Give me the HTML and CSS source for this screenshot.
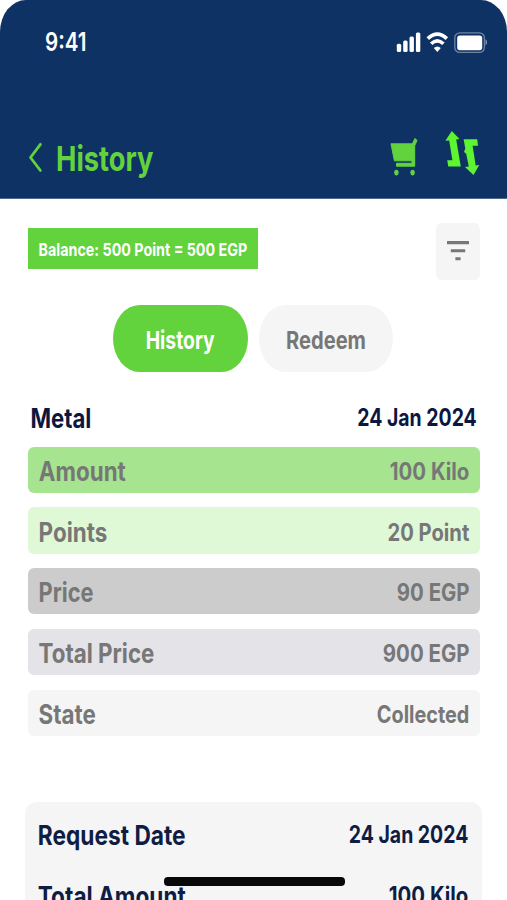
FILE: index.html
```html
<!DOCTYPE html>
<html lang="en">
<head>
<meta charset="utf-8">
<title>History</title>
<link rel="stylesheet" href="styles.css">
</head>
<body>
<div class="phone">
  <header class="header">
    <div class="status">
      <svg class="label time" width="42" height="30"><text x="0" y="21.4" textLength="41.5" lengthAdjust="spacingAndGlyphs">9:41</text></svg>
      <svg class="status-icons" width="92" height="24" viewBox="0 0 92 24">
        <g fill="#fff">
          <rect x="1.8" y="13.8" width="4.4" height="8.2" rx="1.5"/>
          <rect x="8.2" y="10.6" width="4.4" height="11.4" rx="1.5"/>
          <rect x="14.5" y="6.6" width="4.4" height="15.4" rx="1.5"/>
          <rect x="20.9" y="2.6" width="4.4" height="19.4" rx="1.5"/>
          <path d="M42.3 22 38.8 18Q42.3 14.9 45.8 18Z"/>
          <rect x="62.2" y="5.4" width="25" height="14.8" rx="2.6"/>
        </g>
        <g fill="none" stroke="#fff" stroke-width="3.6">
          <path d="M32.8 8.6Q42.3-.4 51.8 8.6"/>
          <path d="M36.2 13.8Q42.3 7.8 48.4 13.8"/>
        </g>
        <rect x="59.8" y="2.8" width="29.6" height="19.6" rx="5" fill="none" stroke="#fff" stroke-opacity=".4" stroke-width="1.3"/>
        <path d="M90.5 9.3Q92.2 10.2 92.2 12.3T90.5 15.4Z" fill="#fff" fill-opacity=".45"/>
      </svg>
    </div>
    <div class="nav">
      <svg class="back" width="16" height="32" viewBox="0 0 16 32"><path d="M13.4 3.3 3.5 16.5 13.4 29.5" fill="none" stroke="#62d23d" stroke-width="2.8" stroke-linecap="round" stroke-linejoin="round"/></svg>
      <svg class="label title" width="99" height="40"><text x="0" y="31.4" textLength="97.5" lengthAdjust="spacingAndGlyphs">History</text></svg>
      <svg class="cart" width="30" height="40" viewBox="0 0 30 40">
        <path d="M2 6.8H23.3L26 1.4 28 3.4 25.7 8.7V29.2H7.5V26.3H23V23.8H5.4Z" fill="#62d23d" stroke="#62d23d" stroke-width="1" stroke-linejoin="round"/>
        <ellipse cx="7.4" cy="35.6" rx="2.2" ry="2.8" fill="#62d23d"/>
        <ellipse cx="23.6" cy="35.6" rx="2.2" ry="2.8" fill="#62d23d"/>
      </svg>
      <svg class="swap" width="36" height="46" viewBox="0 0 36 46">
        <path d="M6.8 1 14.5 9 11.2 9.5 15.8 36.5H3.3L2.2 30.2H7.4L4.2 10.5 .4 10.8Z" fill="#5df52f"/>
        <path d="M18.6 9.3H32.2L33 15.8H27.6L30.7 35.4 34.3 35 28.5 45 20 37 23.8 36.4 21.2 23.8 19 22 20.3 18.5Z" fill="#5df52f"/>
      </svg>
    </div>
  </header>
  <main class="content">
    <div class="toolbar">
      <div class="balance"><svg class="label" width="210" height="24"><text x=".6" y="17.5" textLength="208.6" lengthAdjust="spacingAndGlyphs">Balance: 500 Point = 500 EGP</text></svg></div>
      <button class="filter" aria-label="Filter"><svg width="22" height="20" viewBox="0 0 22 20"><path d="M0 1.6H22M3.8 9.8H18.2M8.4 17.8H13.6" stroke="#777" stroke-width="3.1"/></svg></button>
    </div>
    <div class="tabs">
      <button class="tab active"><svg class="label" width="70" height="34"><text x=".7" y="26.5" textLength="69" lengthAdjust="spacingAndGlyphs">History</text></svg></button>
      <button class="tab"><svg class="label" width="81" height="34"><text x="1" y="26.5" textLength="80" lengthAdjust="spacingAndGlyphs">Redeem</text></svg></button>
    </div>
    <div class="row heading">
      <svg class="label name" width="62" height="32"><text x=".5" y="25.5" textLength="60.8" lengthAdjust="spacingAndGlyphs">Metal</text></svg>
      <svg class="label value" width="120" height="32"><text x=".3" y="23.8" textLength="119.4" lengthAdjust="spacingAndGlyphs">24 Jan 2024</text></svg>
    </div>
    <div class="rows">
      <div class="row amount">
        <svg class="label name" width="88" height="32"><text x=".8" y="26.7" textLength="87" lengthAdjust="spacingAndGlyphs">Amount</text></svg>
        <svg class="label value" width="81" height="32"><text x=".8" y="25.8" textLength="79.5" lengthAdjust="spacingAndGlyphs">100 Kilo</text></svg>
      </div>
      <div class="row points">
        <svg class="label name" width="70" height="32"><text x=".6" y="26.7" textLength="68.7" lengthAdjust="spacingAndGlyphs">Points</text></svg>
        <svg class="label value" width="83" height="32"><text x=".5" y="25.8" textLength="81.8" lengthAdjust="spacingAndGlyphs">20 Point</text></svg>
      </div>
      <div class="row price">
        <svg class="label name" width="57" height="32"><text x=".6" y="26.7" textLength="55" lengthAdjust="spacingAndGlyphs">Price</text></svg>
        <svg class="label value" width="74" height="32"><text x=".8" y="25.8" textLength="72.8" lengthAdjust="spacingAndGlyphs">90 EGP</text></svg>
      </div>
      <div class="row total">
        <svg class="label name" width="117" height="32"><text x=".6" y="26.7" textLength="115.8" lengthAdjust="spacingAndGlyphs">Total Price</text></svg>
        <svg class="label value" width="88" height="32"><text x=".8" y="25.8" textLength="86.8" lengthAdjust="spacingAndGlyphs">900 EGP</text></svg>
      </div>
      <div class="row state">
        <svg class="label name" width="59" height="32"><text x=".6" y="26.7" textLength="57.2" lengthAdjust="spacingAndGlyphs">State</text></svg>
        <svg class="label value" width="94" height="32"><text x=".8" y="25.8" textLength="92.5" lengthAdjust="spacingAndGlyphs">Collected</text></svg>
      </div>
    </div>
    <section class="card">
      <div class="row">
        <svg class="label name" width="150" height="32"><text x=".8" y="26.8" textLength="147.8" lengthAdjust="spacingAndGlyphs">Request Date</text></svg>
        <svg class="label value" width="121" height="32"><text x=".8" y="25.4" textLength="119.5" lengthAdjust="spacingAndGlyphs">24 Jan 2024</text></svg>
      </div>
      <div class="row">
        <svg class="label name" width="149" height="32"><text x=".8" y="26.5" textLength="148" lengthAdjust="spacingAndGlyphs">Total Amount</text></svg>
        <svg class="label value" width="81" height="32"><text x=".8" y="25" textLength="79.5" lengthAdjust="spacingAndGlyphs">100 Kilo</text></svg>
      </div>
    </section>
  </main>
  <div class="home-indicator"></div>
</div>
</body>
</html>
```
FILE: styles.css
```css
* { box-sizing: border-box; }
body { margin: 0; background: #fff; font-family: Inter, "Liberation Sans", sans-serif; }
svg { display: block; flex: none; }
button { border: 0; padding: 0; font: inherit; }
.phone { position: relative; width: 507px; height: 900px; overflow: hidden; background: #fff; }
.label { overflow: visible; fill: currentColor; font-weight: 700; }

.header { height: 198.5px; background: #0f3265; border-radius: 26px 26px 0 0 / 32px 32px 0 0; border-bottom: 1px solid #4f6b91; }
.status { display: flex; justify-content: space-between; padding: 30px 20px 0 44.5px; height: 60px; color: #fff; }
.time { font-size: 25.5px; font-weight: 600; }
.nav { display: flex; height: 80px; padding: 0 26px 0 27px; margin-top: 70px; color: #62d23d; }
.back { margin-top: 11px; }
.title { margin: 10px 0 0 12.5px; font-size: 34.5px; }
.cart { margin: 7px 0 0 auto; }
.swap { margin: 0 0 0 26px; }

.content { padding: 24px 27px 0 27.5px; }
.toolbar { display: flex; justify-content: space-between; }
.balance { width: 230px; height: 41.5px; margin-top: 5px; padding: 10.5px 0 0 10px; background: #62d23d; color: #fff; font-size: 17.8px; }
.filter { display: grid; place-items: center; width: 44px; height: 57.5px; background: #f5f5f5; border-radius: 5px / 7px; }
.tabs { display: flex; gap: 11px; margin: 25px 0 0 85.3px; }
.tab { display: flex; justify-content: center; width: 134.8px; height: 66.5px; padding-top: 17px; border-radius: 27px / 34px; background: #f5f5f5; color: #777; font-size: 24.5px; }
.tab.active { background: #62d23d; color: #fff; }

.row { display: flex; justify-content: space-between; align-items: flex-start; }
.name { font-size: 27px; }
.value { font-size: 24px; }
.heading { height: 45.3px; margin-top: 30px; padding: 0 3px 0 2px; color: #0b1740; }
.rows { display: grid; gap: 14.6px; color: #777; }
.rows .row { height: 46.1px; padding: 7.3px 10px 0; border-radius: 6px; }
.rows .amount { background: #a6e48f; }
.rows .points { background: #dff9d7; }
.rows .price { background: #ccc; }
.rows .total { background: #e4e3e8; }
.rows .state { background: #f5f5f5; }
.card { display: grid; gap: 28.7px; width: 457.5px; height: 140px; margin: 66.5px 0 0 -3px; padding: 15.7px 13px 0 12.5px; align-content: start; background: #f5f5f5; border-radius: 12px; color: #0f1d44; }
.home-indicator { position: absolute; left: 164px; top: 876.5px; width: 181px; height: 9px; border-radius: 4px; background: #080808; }
```
